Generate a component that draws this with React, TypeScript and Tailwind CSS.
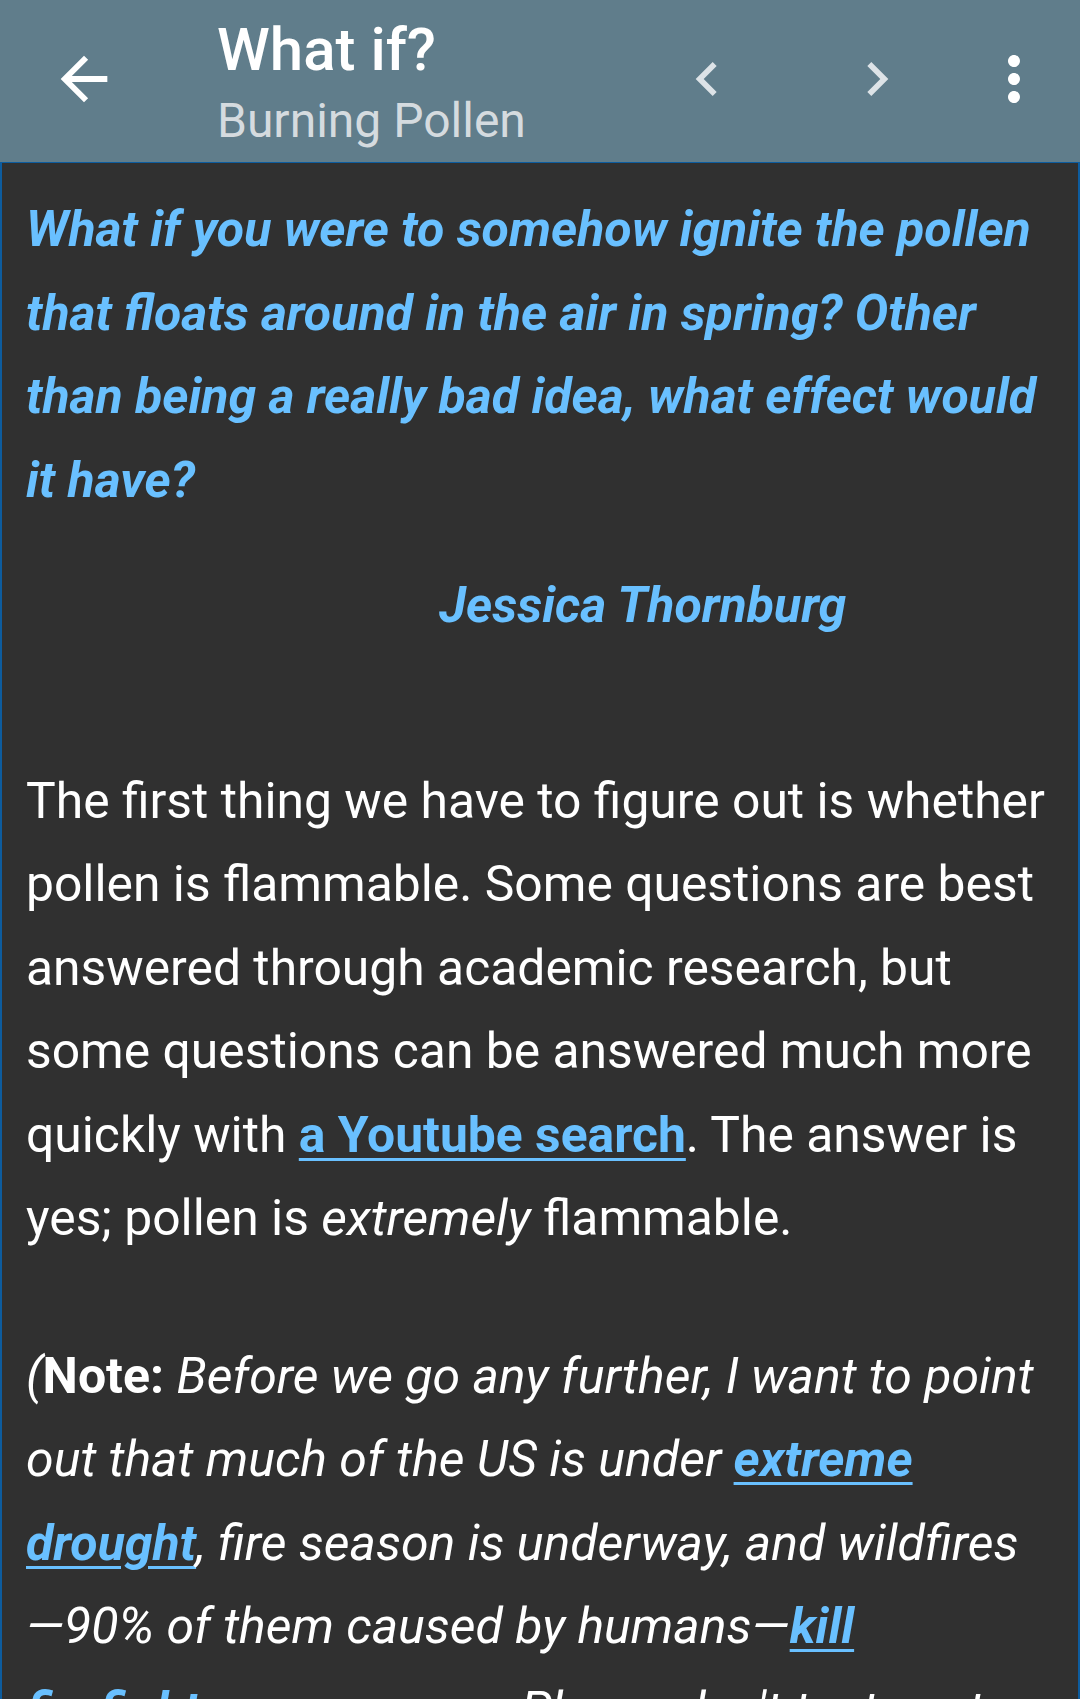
const BackIcon = () => (
  <svg width="70" height="70" viewBox="0 0 24 24" fill="#ffffff">
    <path d="M20 11H7.83l5.59-5.59L12 4l-8 8 8 8 1.41-1.41L7.83 13H20v-2z" />
  </svg>
);

const ChevronLeft = () => (
  <svg width="68" height="68" viewBox="0 0 24 24" fill="#dde3e7">
    <path d="M15.41 7.41L14 6l-6 6 6 6 1.41-1.41L10.83 12z" />
  </svg>
);

const ChevronRight = () => (
  <svg width="68" height="68" viewBox="0 0 24 24" fill="#dde3e7">
    <path d="M8.59 16.59L10 18l6-6-6-6-1.41 1.41L13.17 12z" />
  </svg>
);

const MoreVert = () => (
  <svg width="72" height="72" viewBox="0 0 24 24" fill="#ffffff">
    <path d="M12 8c1.1 0 2-.9 2-2s-.9-2-2-2-2 .9-2 2 .9 2 2 2zm0 2c-1.1 0-2 .9-2 2s.9 2 2 2 2-.9 2-2-.9-2-2-2zm0 6c-1.1 0-2 .9-2 2s.9 2 2 2 2-.9 2-2-.9-2-2-2z" />
  </svg>
);

const Link = ({ children, italic = false }: { children: React.ReactNode; italic?: boolean }) => (
  <a
    href="#"
    className={
      italic
        ? 'font-bold italic text-[#69c0ff] underline decoration-[3px] underline-offset-[6px]'
        : 'font-bold text-[#69c0ff] underline decoration-[3px] underline-offset-[6px]'
    }
  >
    {children}
  </a>
);

export default function App() {
  return (
    <div className="w-[1080px] h-[1699px] overflow-hidden bg-[#303030]" style={{ fontFamily: 'Roboto, "Noto Sans", sans-serif' }}>
      <header className="flex h-[162px] bg-[#607d8b]">
        <button className="w-[168px] pb-[4px] flex items-center justify-center">
          <BackIcon />
        </button>
        <div className="flex-1 flex flex-col pt-[20px] pl-[49px]">
          <h1 className="text-[60px] leading-[60px] font-medium text-white">What if?</h1>
          <p className="mt-[17px] text-[48px] leading-[48px] text-[#d5dbdf]">Burning Pollen</p>
        </div>
        <button className="w-[170px] pb-[4px] flex items-center justify-center">
          <ChevronLeft />
        </button>
        <button className="w-[170px] pb-[4px] flex items-center justify-center">
          <ChevronRight />
        </button>
        <button className="w-[104px] mr-[14px] pb-[4px] flex items-center justify-center">
          <MoreVert />
        </button>
      </header>

      <main className="border-x-2 border-t border-[#0d5c9e] px-[24px] pt-[25px] text-white">
        <p className="text-[50px] leading-[83.5px] font-bold italic text-[#69c0ff]">
          What if you were to somehow ignite the pollen that floats around in the air in spring? Other than being a really bad idea, what effect would it have?
        </p>
        <p className="mt-[42px] pl-[413px] text-[50px] leading-[83.5px] font-bold italic text-[#69c0ff]">
          Jessica Thornburg
        </p>

        <p className="mt-[112px] text-[49.8px] leading-[83.5px]">
          The first thing we have to figure out is whether pollen is flammable. Some questions are best answered through academic research, but some questions can be answered much more quickly with <Link>a Youtube search</Link>. The answer is yes; pollen is <em>extremely</em> flammable.
        </p>

        <p className="mt-[74px] text-[50px] leading-[83.5px] italic">
          (<strong className="font-bold not-italic">Note:</strong> Before we go any further, I want to point out that much of the US is under <Link italic>extreme drought</Link>, fire season is underway, and wildfires—90% of them caused by humans—<Link italic>kill firefighters</Link> every year. Please don't try to set anything on fire.)
        </p>
      </main>
    </div>
  );
}
